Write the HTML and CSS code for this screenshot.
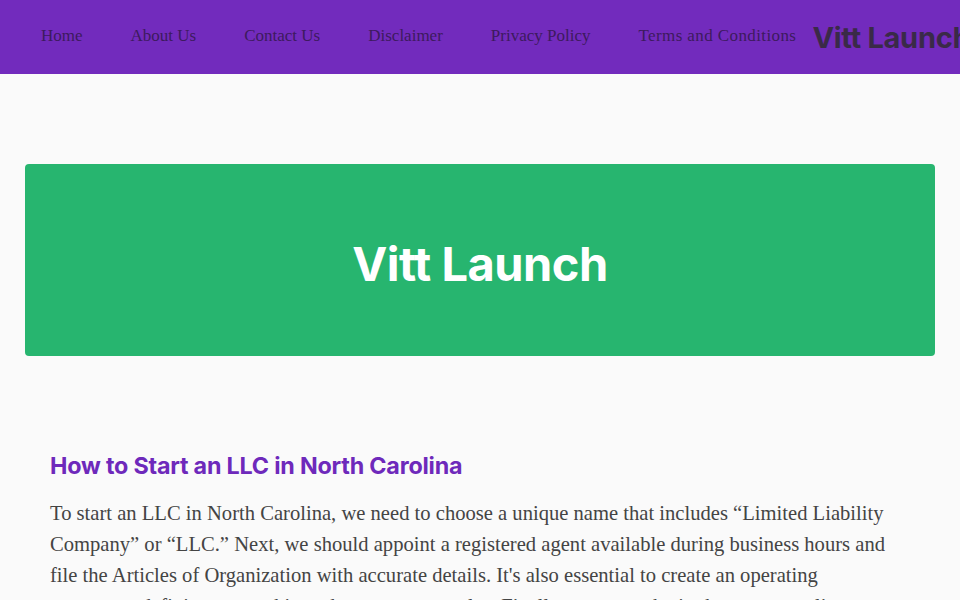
FILE: index.html
```html
<!DOCTYPE html>
<html lang="en">
<head>
<meta charset="utf-8">
<title>Vitt Launch</title>
<link rel="stylesheet" href="styles.css">
</head>
<body>
<header class="site-header">
  <nav class="nav">
    <a class="nav-link" href="#">Home</a>
    <a class="nav-link" href="#">About Us</a>
    <a class="nav-link" href="#">Contact Us</a>
    <a class="nav-link" href="#">Disclaimer</a>
    <a class="nav-link" href="#">Privacy Policy</a>
    <a class="nav-link nav-link-wide" href="#">Terms and Conditions</a>
  </nav>
  <div class="brand">Vitt Launch</div>
</header>
<main class="main">
  <section class="hero">
    <h1 class="hero-title">Vitt Launch</h1>
  </section>
  <article class="article">
    <h2 class="article-title">How to Start an LLC in North Carolina</h2>
    <p class="article-text">To start an LLC in North Carolina, we need to choose a unique name that includes “Limited Liability Company” or “LLC.” Next, we should appoint a registered agent available during business hours and file the Articles of Organization with accurate details. It's also essential to create an operating agreement defining ownership and management roles. Finally, we must obtain the necessary licenses and permits.</p>
  </article>
</main>
</body>
</html>
```
FILE: styles.css
```css
html, body {
  margin: 0;
  padding: 0;
}
body {
  background: #fafafa;
  width: 960px;
  height: 600px;
  overflow: hidden;
}
.site-header {
  background: #722bbd;
  height: 74px;
  display: flex;
  align-items: center;
  padding-left: 17px;
  white-space: nowrap;
  box-sizing: border-box;
}
.nav {
  display: flex;
  align-items: center;
  padding-bottom: 2px;
}
.nav-link {
  font-family: "Liberation Serif", "DejaVu Serif", serif;
  font-size: 17px;
  color: #3d1a5e;
  text-decoration: none;
  padding: 0 24px;
}
.nav-link-wide {
  letter-spacing: 0.4px;
}
.brand {
  font-family: Inter, "Liberation Sans", sans-serif;
  font-weight: 700;
  font-size: 29px;
  color: #3a2a48;
  letter-spacing: -0.3px;
  margin-left: -8px;
}
.main {
  padding: 90px 25px 0;
}
.hero {
  background: #27b56f;
  border-radius: 4px;
  height: 192px;
  display: flex;
  align-items: center;
  justify-content: center;
}
.hero-title {
  margin: 0;
  padding-top: 6px;
  font-family: Inter, "Liberation Sans", sans-serif;
  font-weight: 700;
  font-size: 47px;
  color: #ffffff;
  letter-spacing: -0.5px;
}
.article {
  padding: 95px 25px 0;
  width: 840px;
}
.article-title {
  margin: 0 0 18px;
  font-family: Inter, "Liberation Sans", sans-serif;
  font-weight: 700;
  font-size: 23.3px;
  color: #6e29bb;
  letter-spacing: -0.2px;
}
.article-text {
  margin: 0;
  font-family: "Liberation Serif", "DejaVu Serif", serif;
  font-size: 20.6px;
  line-height: 31px;
  color: #444444;
}
```
